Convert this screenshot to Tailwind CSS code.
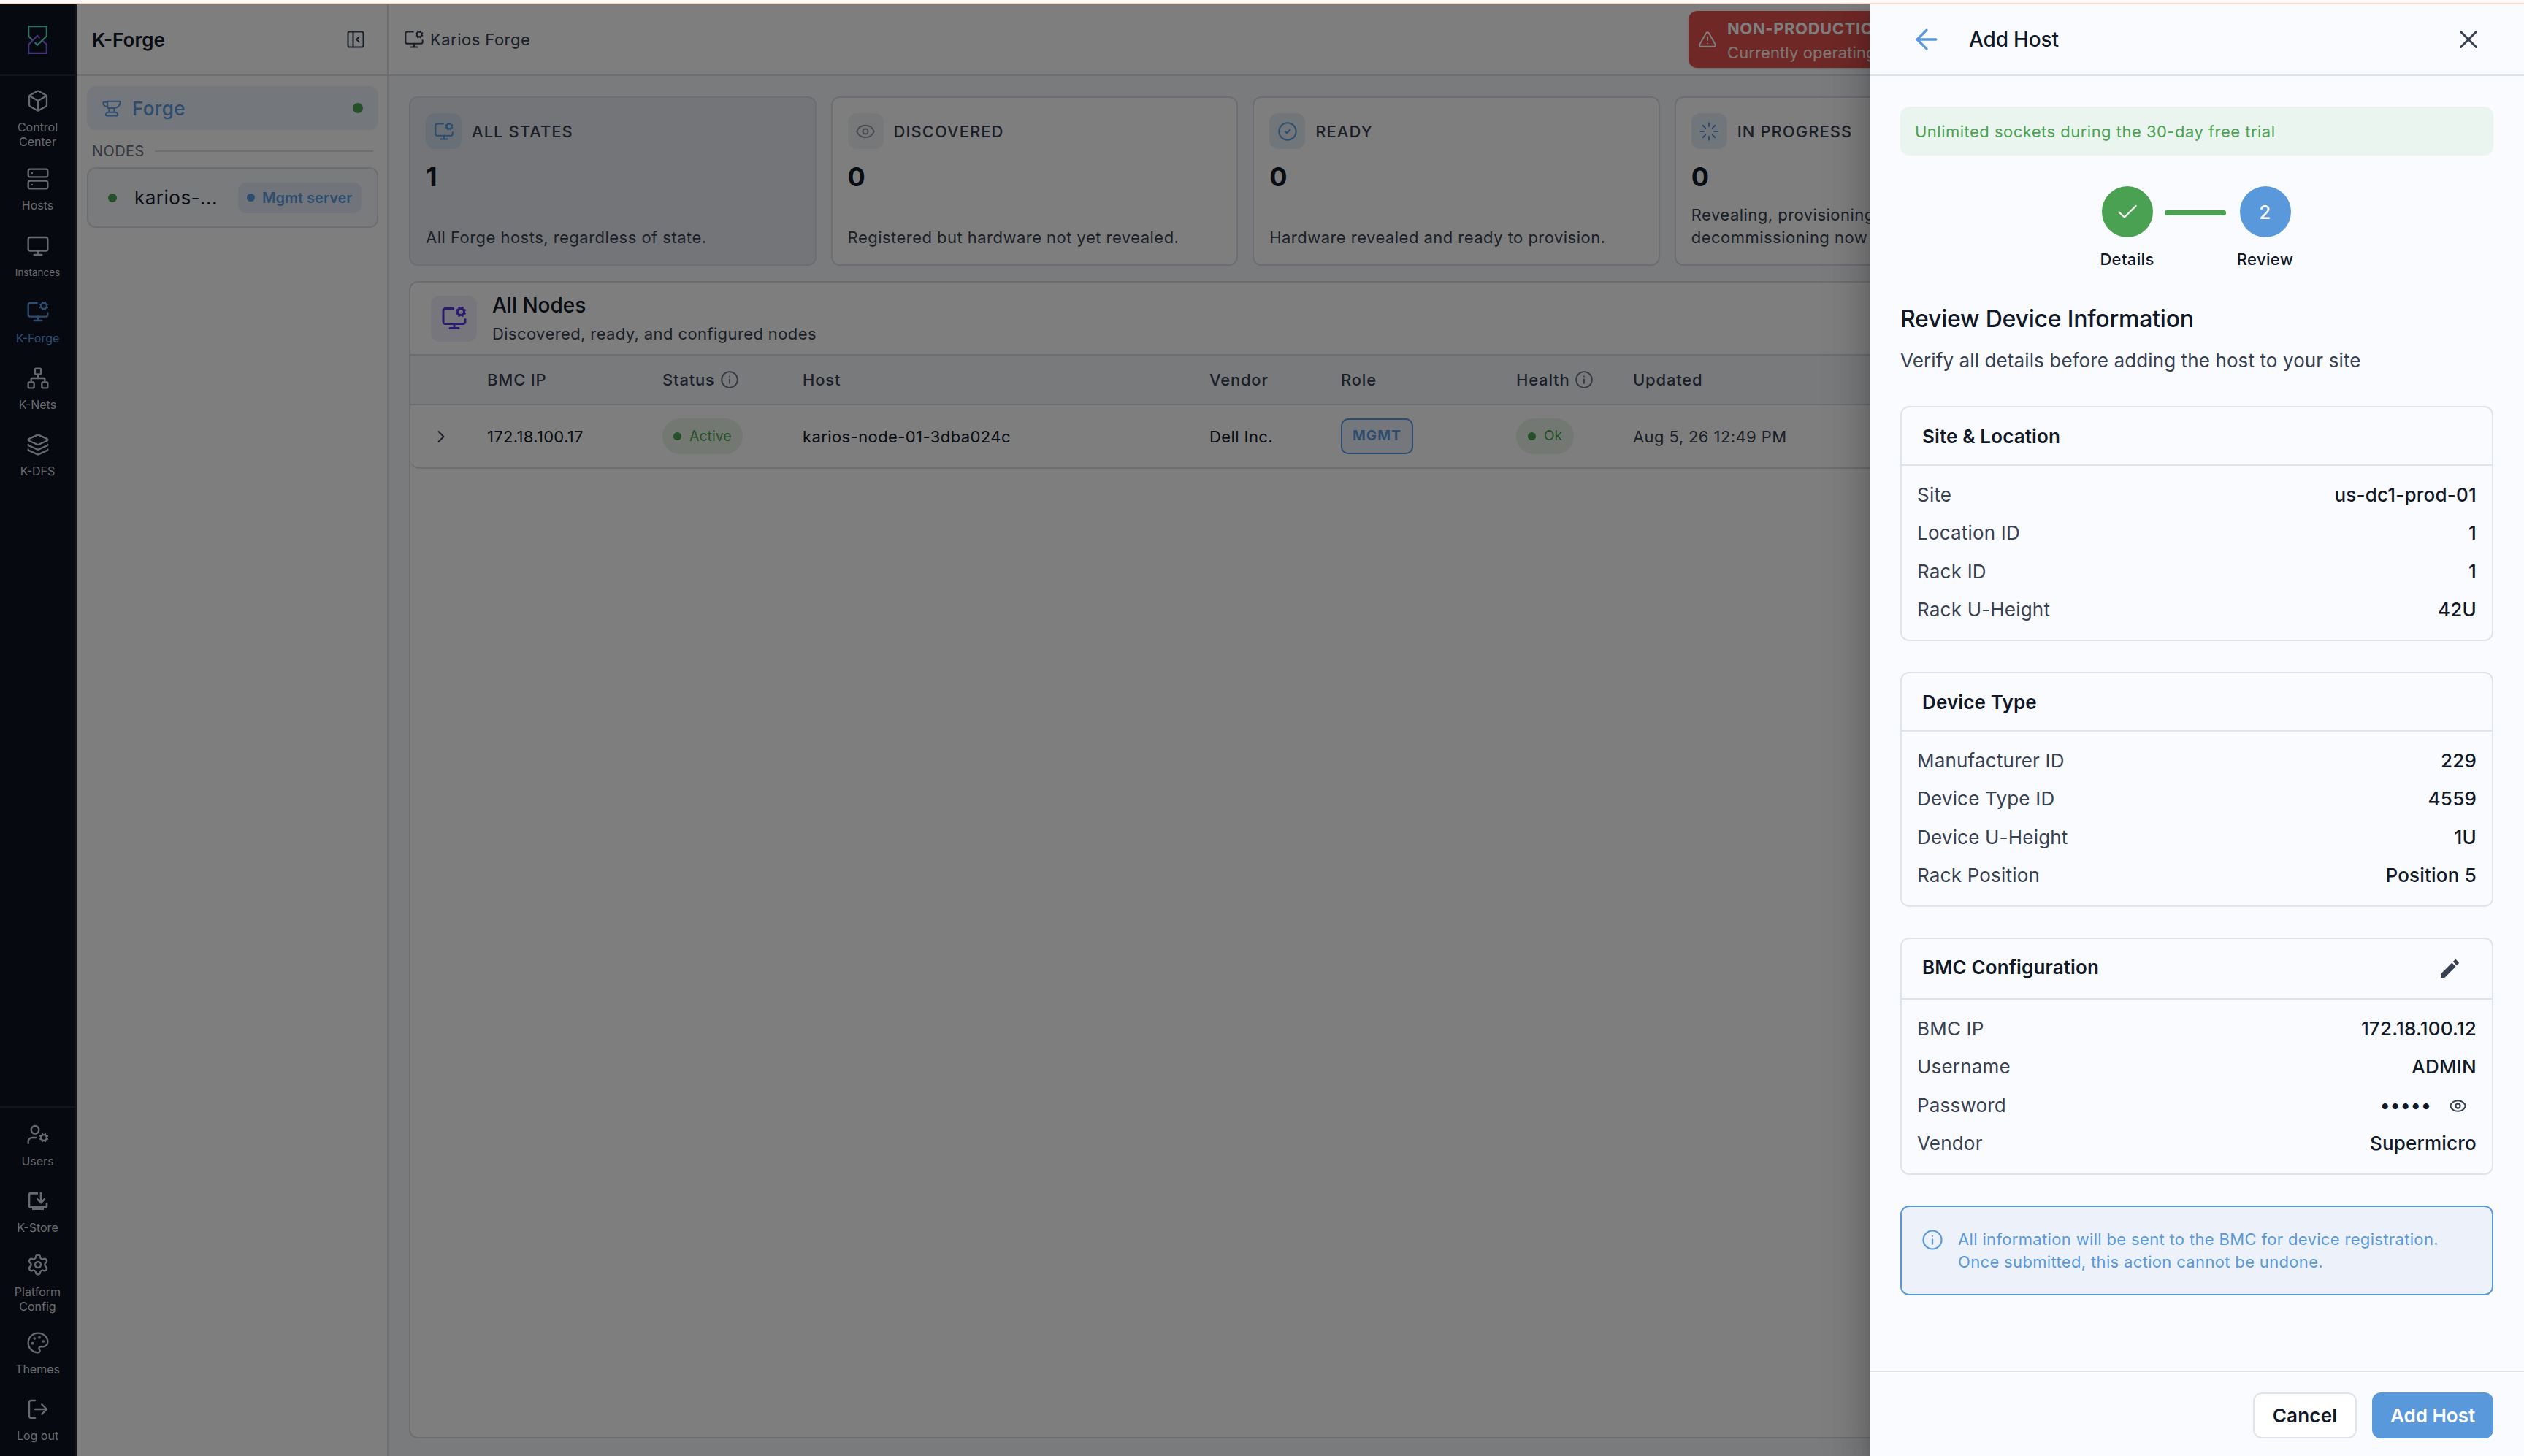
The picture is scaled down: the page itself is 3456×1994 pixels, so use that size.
<!DOCTYPE html>
<html lang="en">
<head>
  <meta charset="UTF-8">
  <title>Karios Forge - Add Host</title>
  <script src="https://cdn.jsdelivr.net/npm/@tailwindcss/browser@4"></script>
</head>
<body class="font-['Inter',sans-serif] text-[#111827] bg-white">

  <!-- Icon sprite -->
  <svg class="hidden">
    <symbol id="monitor-cog" viewBox="0 0 24 24">
      <path d="M12 17v4"/><path d="m14.305 7.53.923-.382"/><path d="m15.228 4.852-.923-.383"/><path d="m16.852 3.228-.383-.924"/><path d="m16.852 8.772-.383.923"/><path d="m19.148 3.228.383-.924"/><path d="m19.53 9.696-.382-.924"/><path d="m20.772 4.852.924-.383"/><path d="m20.772 7.148.924.383"/><path d="M22 13v2a2 2 0 0 1-2 2H4a2 2 0 0 1-2-2V5a2 2 0 0 1 2-2h7"/><path d="M8 21h8"/><circle cx="18" cy="6" r="3"/>
    </symbol>
    <symbol id="eye" viewBox="0 0 24 24">
      <path d="M2.062 12.348a1 1 0 0 1 0-.696 10.75 10.75 0 0 1 19.876 0 1 1 0 0 1 0 .696 10.75 10.75 0 0 1-19.876 0"/><circle cx="12" cy="12" r="3"/>
    </symbol>
    <symbol id="info" viewBox="0 0 24 24">
      <circle cx="12" cy="12" r="10"/><path d="M12 16.5v-5"/><path d="M12 7.8h.01"/>
    </symbol>
  </svg>

  <div class="relative h-[1994px] w-[3456px] overflow-hidden flex flex-col">
    <!-- Browser chrome edge -->
    <div class="h-[6px] shrink-0 bg-[#fef9f6] border-b-2 border-[#f3ddd1]"></div>

    <div class="flex flex-1 min-h-0">
      <!-- Sidebar -->
      <nav class="w-[105px] shrink-0 flex flex-col bg-[#0d1321] border-r-2 border-[#232836] text-[#d1d5db]">
        <div class="h-[98px] shrink-0 flex items-center justify-center border-b-2 border-[#232836]">
          <svg class="w-[27px] h-[39px] -ml-[1px]" viewBox="0 0 27 39" fill="none" stroke-width="2.2">
            <path stroke="#5fd9c5" d="M7 20.6 1.2 14.6V1.2h24.6v13.4L13.2 26.6l-3.6-3.6"/>
            <path stroke="#8467f2" d="M20.4 20.6l5.4 5.4v11.8H1.2V26l12-12.2 3.4 3.4"/>
          </svg>
        </div>

        <div class="pt-[10px] flex flex-col text-[16px] leading-[20px] text-center">
          <a class="h-[107px] pt-2 flex flex-col items-center gap-[10px]">
            <svg class="size-8" viewBox="0 0 24 24" fill="none" stroke="currentColor" stroke-width="1.75" stroke-linecap="round" stroke-linejoin="round"><path d="M21 8a2 2 0 0 0-1-1.73l-7-4a2 2 0 0 0-2 0l-7 4A2 2 0 0 0 3 8v8a2 2 0 0 0 1 1.73l7 4a2 2 0 0 0 2 0l7-4A2 2 0 0 0 21 16Z"/><path d="m3.3 7 8.7 5 8.7-5"/><path d="M12 22V12"/></svg>
            <span>Control<br>Center</span>
          </a>
          <a class="h-[92px] pt-2 flex flex-col items-center gap-[10px]">
            <svg class="size-8" viewBox="0 0 24 24" fill="none" stroke="currentColor" stroke-width="1.75" stroke-linecap="round" stroke-linejoin="round"><rect width="20" height="8" x="2" y="2" rx="2"/><rect width="20" height="8" x="2" y="14" rx="2"/><path d="M6 6h.01"/><path d="M6 18h.01"/></svg>
            <span>Hosts</span>
          </a>
          <a class="h-[90px] pt-2 flex flex-col items-center gap-[10px]">
            <svg class="size-8" viewBox="0 0 24 24" fill="none" stroke="currentColor" stroke-width="1.75" stroke-linecap="round" stroke-linejoin="round"><rect width="20" height="14" x="2" y="3" rx="2"/><path d="M8 21h8"/><path d="M12 17v4"/></svg>
            <span class="text-[13.5px]">Instances</span>
          </a>
          <a class="h-[91px] pt-2 flex flex-col items-center gap-[10px] text-[#5a98dc]">
            <svg class="size-8" fill="none" stroke="currentColor" stroke-width="1.75" stroke-linecap="round" stroke-linejoin="round"><use href="#monitor-cog"/></svg>
            <span>K-Forge</span>
          </a>
          <a class="h-[91px] pt-2 flex flex-col items-center gap-[10px]">
            <svg class="size-8" viewBox="0 0 24 24" fill="none" stroke="currentColor" stroke-width="1.75" stroke-linecap="round" stroke-linejoin="round"><rect x="16" y="16" width="6" height="6" rx="1"/><rect x="2" y="16" width="6" height="6" rx="1"/><rect x="9" y="2" width="6" height="6" rx="1"/><path d="M5 16v-3a1 1 0 0 1 1-1h12a1 1 0 0 1 1 1v3"/><path d="M12 12V8"/></svg>
            <span>K-Nets</span>
          </a>
          <a class="h-[91px] pt-2 flex flex-col items-center gap-[10px]">
            <svg class="size-8" viewBox="0 0 24 24" fill="none" stroke="currentColor" stroke-width="1.75" stroke-linecap="round" stroke-linejoin="round"><path d="M12.83 2.18a2 2 0 0 0-1.66 0L2.6 6.08a1 1 0 0 0 0 1.83l8.58 3.91a2 2 0 0 0 1.66 0l8.58-3.9a1 1 0 0 0 0-1.83z"/><path d="M2 12a1 1 0 0 0 .58.91l8.6 3.91a2 2 0 0 0 1.65 0l8.58-3.9A1 1 0 0 0 22 12"/><path d="M2 17a1 1 0 0 0 .58.91l8.6 3.91a2 2 0 0 0 1.65 0l8.58-3.9A1 1 0 0 0 22 17"/></svg>
            <span>K-DFS</span>
          </a>
        </div>

        <div class="mt-auto h-[479px] pt-[13px] border-t-2 border-[#232836] flex flex-col text-[16px] leading-[20px] text-center">
          <a class="h-[91px] pt-2 flex flex-col items-center gap-[10px]">
            <svg class="size-8" viewBox="0 0 24 24" fill="none" stroke="currentColor" stroke-width="1.75" stroke-linecap="round" stroke-linejoin="round"><path d="M10 15H6a4 4 0 0 0-4 4v2"/><path d="m14.305 16.53.923-.382"/><path d="m15.228 13.852-.923-.383"/><path d="m16.852 12.228-.383-.923"/><path d="m16.852 17.772-.383.924"/><path d="m19.148 12.228.383-.923"/><path d="m19.53 18.696-.382-.924"/><path d="m20.772 13.852.924-.383"/><path d="m20.772 16.148.924.383"/><circle cx="18" cy="15" r="3"/><circle cx="9" cy="7" r="4"/></svg>
            <span>Users</span>
          </a>
          <a class="h-[87px] pt-2 flex flex-col items-center gap-[10px]">
            <svg class="size-8" viewBox="0 0 24 24" fill="currentColor"><path d="M20 17H4V5h8V3H4c-1.1 0-2 .9-2 2v12c0 1.1.9 2 2 2h2v2h12v-2h2c1.1 0 2-.9 2-2v-3h-2v3z"/><path d="m15.1 15 4.7-4.7-1.4-1.4-2.4 2.4V3h-2v8.3l-2.3-2.4-1.4 1.4z"/></svg>
            <span>K-Store</span>
          </a>
          <a class="h-[107px] pt-2 flex flex-col items-center gap-[11px]">
            <svg class="size-8" viewBox="0 0 24 24" fill="none" stroke="currentColor" stroke-width="1.75" stroke-linecap="round" stroke-linejoin="round"><path d="M9.671 4.136a2.34 2.34 0 0 1 4.659 0 2.34 2.34 0 0 0 3.319 1.915 2.34 2.34 0 0 1 2.33 4.033 2.34 2.34 0 0 0 0 3.831 2.34 2.34 0 0 1-2.33 4.033 2.34 2.34 0 0 0-3.319 1.915 2.34 2.34 0 0 1-4.659 0 2.34 2.34 0 0 0-3.32-1.915 2.34 2.34 0 0 1-2.33-4.033 2.34 2.34 0 0 0 0-3.831A2.34 2.34 0 0 1 6.35 6.051a2.34 2.34 0 0 0 3.319-1.915"/><circle cx="12" cy="12" r="3"/></svg>
            <span>Platform<br>Config</span>
          </a>
          <a class="h-[91px] pt-2 flex flex-col items-center gap-[10px]">
            <svg class="size-8" viewBox="0 0 24 24" fill="none" stroke="currentColor" stroke-width="1.75" stroke-linecap="round" stroke-linejoin="round"><path d="M12 22a1 1 0 0 1 0-20 10 9 0 0 1 10 9 5 5 0 0 1-5 5h-2.25a1.75 1.75 0 0 0-1.4 2.8l.3.4a1.75 1.75 0 0 1-1.4 2.8z"/><g fill="currentColor"><circle cx="13.5" cy="6.5" r=".5"/><circle cx="17.5" cy="10.5" r=".5"/><circle cx="6.5" cy="12.5" r=".5"/><circle cx="8.5" cy="7.5" r=".5"/></g></svg>
            <span>Themes</span>
          </a>
          <a class="pt-2 flex flex-col items-center gap-[10px]">
            <svg class="size-8" viewBox="0 0 24 24" fill="none" stroke="currentColor" stroke-width="1.75" stroke-linecap="round" stroke-linejoin="round"><path d="m16 17 5-5-5-5"/><path d="M21 12H9"/><path d="M9 21H5a2 2 0 0 1-2-2V5a2 2 0 0 1 2-2h4"/></svg>
            <span>Log out</span>
          </a>
        </div>
      </nav>

      <!-- Nodes panel -->
      <aside class="w-[427px] shrink-0 flex flex-col bg-[#fcfcfc] border-r-2 border-[#dadbe5]">
        <div class="h-[98px] shrink-0 flex items-center justify-between pl-[21px] pr-[29px] border-b-2 border-[#dadbe5]">
          <h1 class="text-[26px] font-semibold">K-Forge</h1>
          <svg class="size-7 text-[#374151]" viewBox="0 0 24 24" fill="none" stroke="currentColor" stroke-width="1.75" stroke-linecap="round" stroke-linejoin="round"><rect width="18" height="18" x="3" y="3" rx="2"/><path d="M9 3v18"/><path d="m16 15-3-3 3-3"/></svg>
        </div>
        <div class="flex flex-col pt-[14px] pl-[14px] pr-[12px]">
          <div class="h-[60px] flex items-center pl-[20px] pr-[21px] rounded-xl bg-[#5a98dc]/12 text-[#5a98dc]">
            <svg class="size-[28px]" viewBox="0 0 24 24" fill="none" stroke="currentColor" stroke-width="1.75" stroke-linecap="round" stroke-linejoin="round"><path d="M7 10H6a4 4 0 0 1-4-4 1 1 0 0 1 1-1h4"/><path d="M7 5a1 1 0 0 1 1-1h13a1 1 0 0 1 1 1 7 7 0 0 1-7 7H8a1 1 0 0 1-1-1z"/><path d="M9 12v5"/><path d="M15 12v5"/><path d="M5 20a3 3 0 0 1 3-3h8a3 3 0 0 1 3 3 1 1 0 0 1-1 1H6a1 1 0 0 1-1-1"/></svg>
            <span class="ml-[14px] text-[26px] font-medium tracking-[0.39px]">Forge</span>
            <span class="ml-auto size-[14px] rounded-full bg-[#4ba152]"></span>
          </div>
          <div class="h-[51px] pt-[6px] flex items-center gap-[14px] pl-[7px] pr-[7px] text-[20px] tracking-[0.42px] text-[#6b7280]">
            <span>NODES</span>
            <span class="flex-1 h-[2px] bg-[#dadbe5]"></span>
          </div>
          <div class="h-[83px] flex items-center pl-[27px] pr-[21px] rounded-xl border-2 border-[#dadbe5] bg-[#f5f7fa]">
            <span class="size-[12px] rounded-full bg-[#4ba152]"></span>
            <span class="ml-[24px] text-[26px] tracking-[0.49px]">karios-...</span>
            <span class="ml-auto h-[42px] w-[169px] flex items-center gap-[10px] pl-[12px] rounded-[10px] bg-[#5a98dc]/12 text-[20px] font-semibold text-[#5a98dc] whitespace-nowrap">
              <span class="size-[11px] rounded-full bg-[#5a98dc]"></span>Mgmt server
            </span>
          </div>
        </div>
      </aside>

      <!-- Main -->
      <main class="flex-1 min-w-0 flex flex-col bg-[#f4f6f9]">
        <header class="h-[98px] shrink-0 flex items-center pl-[21px] bg-[#fcfcfc] border-b-2 border-[#dadbe5] text-[#374151]">
          <svg class="size-[28px]" fill="none" stroke="currentColor" stroke-width="1.75" stroke-linecap="round" stroke-linejoin="round"><use href="#monitor-cog"/></svg>
          <span class="ml-[8px] text-[22px] tracking-[0.47px]">Karios Forge</span>
          <div class="ml-auto w-[1144px] h-[78px] flex items-center pl-[13px] rounded-xl bg-[#de504c] text-white shadow-sm">
            <svg class="size-[26px]" viewBox="0 0 24 24" fill="none" stroke="currentColor" stroke-width="1.75" stroke-linecap="round" stroke-linejoin="round"><path d="m21.73 18-8-14a2 2 0 0 0-3.48 0l-8 14A2 2 0 0 0 4 21h16a2 2 0 0 0 1.73-3"/><path d="M12 9v4"/><path d="M12 17h.01"/></svg>
            <div class="ml-[14px] pt-[3px] leading-[33px]">
              <div class="text-[22px] font-bold tracking-[0.6px]">NON-PRODUCTION</div>
              <div class="text-[22px] tracking-[0.1px] text-white/90">Currently operating</div>
            </div>
          </div>
        </header>

        <div class="flex-1 min-h-0 flex flex-col gap-[21px] px-[28px] pt-[28px] pb-[24px]">
          <!-- State cards -->
          <div class="grid grid-cols-5 gap-5">
            <div class="h-[232px] flex flex-col p-[21px] rounded-xl border-2 border-[#dadbe5] bg-[#e9eaf0]">
              <div class="flex items-center gap-[14px]">
                <span class="size-[49px] flex items-center justify-center rounded-xl bg-[#5a98dc]/15 text-[#5a98dc]">
                  <svg class="size-[28px]" fill="none" stroke="currentColor" stroke-width="1.75" stroke-linecap="round" stroke-linejoin="round"><use href="#monitor-cog"/></svg>
                </span>
                <span class="pt-px text-[22px] font-medium tracking-[1.03px] text-[#374151]">ALL STATES</span>
              </div>
              <div class="mt-[16px] text-[36px] leading-[44px] font-bold">1</div>
              <p class="mt-auto text-[22px] leading-[31px] tracking-[0.47px] text-[#374151]">All Forge hosts, regardless of state.</p>
            </div>
            <div class="h-[232px] flex flex-col p-[21px] rounded-xl border-2 border-[#dadbe5] bg-[#fcfcfc]">
              <div class="flex items-center gap-[14px]">
                <span class="size-[49px] flex items-center justify-center rounded-xl bg-[#eef1f5] text-[#9298a4]">
                  <svg class="size-[28px]" fill="none" stroke="currentColor" stroke-width="1.75" stroke-linecap="round" stroke-linejoin="round"><use href="#eye"/></svg>
                </span>
                <span class="pt-px text-[22px] font-medium tracking-[1.03px] text-[#374151]">DISCOVERED</span>
              </div>
              <div class="mt-[16px] text-[36px] leading-[44px] font-bold">0</div>
              <p class="mt-auto text-[22px] leading-[31px] tracking-[0.47px] text-[#374151]">Registered but hardware not yet revealed.</p>
            </div>
            <div class="h-[232px] flex flex-col p-[21px] rounded-xl border-2 border-[#dadbe5] bg-[#fcfcfc]">
              <div class="flex items-center gap-[14px]">
                <span class="size-[49px] flex items-center justify-center rounded-xl bg-[#5a98dc]/15 text-[#5a98dc]">
                  <svg class="size-[28px]" viewBox="0 0 24 24" fill="none" stroke="currentColor" stroke-width="1.75" stroke-linecap="round" stroke-linejoin="round"><circle cx="12" cy="12" r="10"/><path d="m9 12 2 2 4-4"/></svg>
                </span>
                <span class="pt-px text-[22px] font-medium tracking-[1.03px] text-[#374151]">READY</span>
              </div>
              <div class="mt-[16px] text-[36px] leading-[44px] font-bold">0</div>
              <p class="mt-auto text-[22px] leading-[31px] tracking-[0.47px] text-[#374151]">Hardware revealed and ready to provision.</p>
            </div>
            <div class="h-[232px] flex flex-col p-[21px] rounded-xl border-2 border-[#dadbe5] bg-[#fcfcfc]">
              <div class="flex items-center gap-[14px]">
                <span class="size-[49px] flex items-center justify-center rounded-xl bg-[#5a98dc]/15 text-[#5a98dc]">
                  <svg class="size-[28px]" viewBox="0 0 24 24" fill="none" stroke="currentColor" stroke-width="1.75" stroke-linecap="round" stroke-linejoin="round"><path d="M12 2v4"/><path d="m16.2 7.8 2.9-2.9"/><path d="M18 12h4"/><path d="m16.2 16.2 2.9 2.9"/><path d="M12 18v4"/><path d="m4.9 19.1 2.9-2.9"/><path d="M2 12h4"/><path d="m4.9 4.9 2.9 2.9"/></svg>
                </span>
                <span class="pt-px text-[22px] font-medium tracking-[1.03px] text-[#374151]">IN PROGRESS</span>
              </div>
              <div class="mt-[16px] text-[36px] leading-[44px] font-bold">0</div>
              <p class="mt-auto text-[22px] leading-[31px] tracking-[0.47px] text-[#374151]">Revealing, provisioning, or<br>decommissioning now</p>
            </div>
          </div>

          <!-- Nodes table -->
          <section class="flex-1 min-h-0 flex flex-col rounded-xl border-2 border-[#dadbe5] bg-[#fcfcfc] overflow-hidden">
            <div class="h-[100px] shrink-0 flex items-center pl-[28px] border-b-2 border-[#dadbe5]">
              <span class="size-[63px] flex items-center justify-center rounded-xl bg-[#5636dc]/8 text-[#5636dc]">
                <svg class="size-[36px]" fill="none" stroke="currentColor" stroke-width="2" stroke-linecap="round" stroke-linejoin="round"><use href="#monitor-cog"/></svg>
              </span>
              <div class="ml-[21px] flex flex-col">
                <h2 class="text-[28px] leading-[42px] font-medium">All Nodes</h2>
                <p class="text-[22px] leading-[36px] tracking-[0.39px] text-[#374151]">Discovered, ready, and configured nodes</p>
              </div>
            </div>
            <div class="h-[68px] shrink-0 grid grid-cols-[105px_240px_192px_557px_180px_240px_160px_1fr] items-center border-b-2 border-[#dadbe5] bg-[#f1f4f8] text-[22px] font-medium tracking-[0.8px] text-[#374151]">
              <span></span>
              <span>BMC IP</span>
              <span class="flex items-center gap-[7px]">Status
                <svg class="size-[26px] text-[#6b7280]" fill="none" stroke="currentColor" stroke-width="1.75" stroke-linecap="round" stroke-linejoin="round"><use href="#info"/></svg>
              </span>
              <span>Host</span>
              <span>Vendor</span>
              <span>Role</span>
              <span class="flex items-center gap-[7px]">Health
                <svg class="size-[26px] text-[#6b7280]" fill="none" stroke="currentColor" stroke-width="1.75" stroke-linecap="round" stroke-linejoin="round"><use href="#info"/></svg>
              </span>
              <span>Updated</span>
            </div>
            <div class="h-[87px] shrink-0 grid grid-cols-[105px_240px_192px_557px_180px_240px_160px_1fr] items-center rounded-bl-xl border-b-2 border-[#dadbe5] text-[22px] tracking-[0.41px]">
              <svg class="ml-[28px] size-[28px] text-[#374151]" viewBox="0 0 24 24" fill="none" stroke="currentColor" stroke-width="1.75" stroke-linecap="round" stroke-linejoin="round"><path d="m9 18 6-6-6-6"/></svg>
              <span class="pt-px tracking-[0.31px]">172.18.100.17</span>
              <span class="w-[110px] h-[49px] flex items-center gap-[11px] pl-[15px] rounded-full bg-[#4ba152]/12 text-[19.5px] tracking-normal text-[#4ba152]">
                <span class="size-[11px] rounded-full bg-[#4ba152]"></span>Active
              </span>
              <span class="pt-px">karios-node-01-3dba024c</span>
              <span class="pt-px">Dell Inc.</span>
              <span class="w-[99px] h-[49px] flex items-center justify-center rounded-[10px] border-2 border-[#5a98dc] bg-[#5a98dc]/12 text-[19px] font-bold tracking-[1.2px] text-[#5a98dc]">MGMT</span>
              <span class="w-[79px] h-[49px] flex items-center gap-[11px] pl-[16px] rounded-full bg-[#4ba152]/12 text-[19px] tracking-normal text-[#4ba152]">
                <span class="size-[11px] rounded-full bg-[#4ba152]"></span>Ok
              </span>
              <span class="pt-px text-[#374151]">Aug 5, 26 12:49 PM</span>
            </div>
          </section>
        </div>
      </main>
    </div>

    <!-- Backdrop -->
    <div class="absolute inset-x-0 top-[6px] bottom-0 bg-black/50 overflow-hidden">

      <!-- Add host drawer -->
      <div class="absolute right-0 inset-y-0 w-[896px] flex flex-col bg-[#fafbfe] shadow-[0px_16px_20px_-10px_rgba(0,0,0,0.2),0px_32px_48px_4px_rgba(0,0,0,0.14),0px_12px_60px_10px_rgba(0,0,0,0.12)]">
        <div class="h-[98px] shrink-0 flex items-center pl-[56px] pr-[55px] border-b-2 border-[#dce3eb]">
          <svg class="size-[44px] text-[#5a98dc]" viewBox="0 0 24 24" fill="none" stroke="currentColor" stroke-width="1.8" stroke-linecap="round" stroke-linejoin="round"><path d="m12 19-7-7 7-7"/><path d="M19 12H5"/></svg>
          <h2 class="ml-[36px] text-[28px] font-medium tracking-[-0.15px]">Add Host</h2>
          <svg class="ml-auto size-[42px] text-[#374151]" viewBox="0 0 24 24" fill="none" stroke="currentColor" stroke-width="1.75" stroke-linecap="round" stroke-linejoin="round"><path d="M18 6 6 18"/><path d="m6 6 12 12"/></svg>
        </div>

        <div class="flex-1 min-h-0 flex flex-col px-[42px] pt-[42px]">
          <div class="h-[67px] shrink-0 flex items-center pl-[20px] pt-px rounded-xl bg-[#ebf5ef] text-[22px] tracking-[0.48px] text-[#4ba152]">Unlimited sockets during the 30-day free trial</div>

          <!-- Stepper -->
          <div class="mt-[42px] h-[115px] shrink-0 flex justify-center text-[22px] font-medium tracking-[0.34px]">
            <div class="w-[73px] flex flex-col items-center">
              <span class="size-[70px] shrink-0 flex items-center justify-center rounded-full bg-[#4ba152] text-white">
                <svg class="w-[28px] h-[20px]" viewBox="0 0 28 20" fill="none" stroke="currentColor" stroke-width="2.4" stroke-linecap="round" stroke-linejoin="round"><path d="M2.5 10.5l7.4 7L25.5 2"/></svg>
              </span>
              <span class="mt-[15px] leading-[30px]">Details</span>
            </div>
            <span class="mt-[33px] mx-[15px] w-[84px] h-[7px] rounded-[3px] bg-[#4ba152]"></span>
            <div class="w-[77px] flex flex-col items-center">
              <span class="size-[70px] shrink-0 flex items-center justify-center rounded-full bg-[#5a98dc] text-[26px] text-white">2</span>
              <span class="mt-[15px] leading-[30px]">Review</span>
            </div>
          </div>

          <h3 class="mt-[45px] text-[32px] leading-[44px] font-medium tracking-[-0.22px]">Review Device Information</h3>
          <p class="mt-[17px] text-[26px] leading-[36px] tracking-[0.11px] text-[#374151]">Verify all details before adding the host to your site</p>

          <div class="mt-[44px] flex flex-col gap-[42px]">
            <div class="h-[322px] rounded-xl border-2 border-[#dfe3ec]">
              <div class="h-[80px] flex items-center pl-[28px] border-b-2 border-[#dfe3ec] text-[26px] font-semibold tracking-[0.14px]">Site &amp; Location</div>
              <div class="flex flex-col gap-[16px] px-[21px] pt-[22px] text-[26px] leading-[36.4px] tracking-[0.2px]">
                <div class="flex justify-between"><span class="text-[#374151]">Site</span><span class="font-medium">us-dc1-prod-01</span></div>
                <div class="flex justify-between"><span class="text-[#374151]">Location ID</span><span class="font-medium">1</span></div>
                <div class="flex justify-between"><span class="text-[#374151]">Rack ID</span><span class="font-medium">1</span></div>
                <div class="flex justify-between"><span class="text-[#374151]">Rack U-Height</span><span class="font-medium">42U</span></div>
              </div>
            </div>

            <div class="h-[322px] rounded-xl border-2 border-[#dfe3ec]">
              <div class="h-[80px] flex items-center pl-[28px] border-b-2 border-[#dfe3ec] text-[26px] font-semibold tracking-[0.14px]">Device Type</div>
              <div class="flex flex-col gap-[16px] px-[21px] pt-[22px] text-[26px] leading-[36.4px] tracking-[0.2px]">
                <div class="flex justify-between"><span class="text-[#374151]">Manufacturer ID</span><span class="font-medium">229</span></div>
                <div class="flex justify-between"><span class="text-[#374151]">Device Type ID</span><span class="font-medium">4559</span></div>
                <div class="flex justify-between"><span class="text-[#374151]">Device U-Height</span><span class="font-medium">1U</span></div>
                <div class="flex justify-between"><span class="text-[#374151]">Rack Position</span><span class="font-medium">Position 5</span></div>
              </div>
            </div>

            <div class="h-[325px] rounded-xl border-2 border-[#dfe3ec]">
              <div class="h-[83px] flex items-center justify-between pl-[28px] pr-[41px] border-b-2 border-[#dfe3ec] text-[26px] font-semibold tracking-[0.14px]">
                <span class="pb-[4px]">BMC Configuration</span>
                <svg class="size-[33px] text-[#374151]" viewBox="0 0 24 24" fill="currentColor"><path d="M3 17.25V21h3.75L17.81 9.94l-3.75-3.75zM20.71 7.04c.39-.39.39-1.02 0-1.41l-2.34-2.34a.9959.9959 0 0 0-1.41 0l-1.83 1.83 3.75 3.75z"/></svg>
              </div>
              <div class="flex flex-col gap-[16px] px-[21px] pt-[22px] text-[26px] leading-[36.4px] tracking-[0.2px]">
                <div class="flex justify-between"><span class="text-[#374151]">BMC IP</span><span class="font-medium">172.18.100.12</span></div>
                <div class="flex justify-between"><span class="text-[#374151]">Username</span><span class="font-medium">ADMIN</span></div>
                <div class="flex items-center justify-between"><span class="text-[#374151]">Password</span>
                  <span class="flex items-center gap-[24px] pr-[13px] font-medium">•••••
                    <svg class="size-[25px] text-[#374151]" fill="none" stroke="currentColor" stroke-width="2" stroke-linecap="round" stroke-linejoin="round"><use href="#eye"/></svg>
                  </span>
                </div>
                <div class="flex justify-between"><span class="text-[#374151]">Vendor</span><span class="font-medium">Supermicro</span></div>
              </div>
            </div>

            <div class="h-[123px] flex pt-[29px] pl-[27px] rounded-xl border-2 border-[#5a98dc] bg-[#edf2fa] text-[#5a98dc]">
              <svg class="mt-[1px] size-[30px]" fill="none" stroke="currentColor" stroke-width="1.75" stroke-linecap="round" stroke-linejoin="round"><use href="#info"/></svg>
              <p class="ml-[20px] text-[22px] leading-[31px] tracking-[0.34px]">All information will be sent to the BMC for device registration.<br>Once submitted, this action cannot be undone.</p>
            </div>
          </div>
        </div>

        <div class="h-[117px] shrink-0 flex justify-end gap-[21px] pt-[28px] pr-[42px] border-t-2 border-[#dfe3ec] text-[26px] font-semibold">
          <button class="w-[142px] h-[63px] pb-px rounded-xl border-2 border-[#dfe3ec] bg-white tracking-[0.2px]">Cancel</button>
          <button class="w-[166px] h-[63px] pb-px rounded-xl bg-[#5a98dc] text-white">Add Host</button>
        </div>
      </div>
    </div>
  </div>

</body>
</html>
